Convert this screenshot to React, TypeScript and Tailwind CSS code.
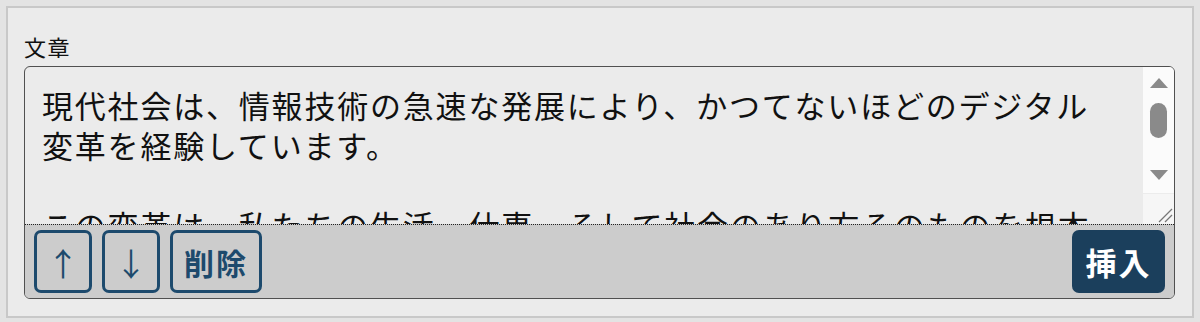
import React from "react";

const FONT = { fontFamily: '"Noto Sans CJK JP", "Noto Sans", sans-serif' };

function FakeScrollbar() {
  return (
    <div className="w-[31px] shrink-0 flex flex-col bg-[#fbfbfb]">
      <div className="h-[126px] flex flex-col items-center pt-[11px]">
        <svg width="18" height="10" viewBox="0 0 18 10">
          <polygon points="9,0 18,10 0,10" fill="#8a8a8a" />
        </svg>
        <div className="mt-[15px] w-[17px] h-[35px] rounded-full bg-[#8a8a8a]" />
        <svg className="mt-[32px]" width="18" height="10" viewBox="0 0 18 10">
          <polygon points="0,0 18,0 9,10" fill="#8a8a8a" />
        </svg>
      </div>
      <div className="flex-1 flex items-end justify-end border-t border-[#ececec] bg-[#f6f6f6]">
        <svg width="16" height="16" viewBox="0 0 16 16" className="mb-[1px] mr-[1px]">
          <line x1="2" y1="15" x2="15" y2="2" stroke="#777" strokeWidth="1.3" />
          <line x1="8" y1="15" x2="15" y2="8" stroke="#777" strokeWidth="1.3" />
        </svg>
      </div>
    </div>
  );
}

export default function App() {
  const lines = [
    "現代社会は、情報技術の急速な発展により、かつてないほどのデジタル",
    "変革を経験しています。",
    "",
    "この変革は、私たちの生活、仕事、そして社会のあり方そのものを根本",
  ];
  return (
    <div className="h-[322px] w-[1200px] bg-[#e3e3e3] px-[6px] pt-[6px]" style={FONT}>
      <div className="h-[312px] border-2 border-[#c8c8c8] bg-[#ebebeb] pl-4 pr-[17px] pt-[24px]">
        <div className="text-[22px] leading-[28px] tracking-[1.5px] text-[#111] mb-[6px]">文章</div>
        <div className="rounded-[6px] border border-[#505050] overflow-hidden bg-[#ebebeb]">
          <div className="flex h-[157px]">
            <div className="flex-1 overflow-hidden pl-[17px] pt-[18px] text-[31px] leading-[40px] tracking-[1.8px] text-[#111]">
              {lines.map((l, i) => (
                <div key={i} className="whitespace-nowrap h-[40px]">
                  {l}
                </div>
              ))}
            </div>
            <FakeScrollbar />
          </div>
          <div className="h-[74px] border-t border-dotted border-[#222] bg-[#cccccc] flex items-center justify-between px-[9px]">
            <div className="flex gap-[10px]">
              <button className="w-[58px] h-[63px] rounded-[7px] border-[3px] border-[#1d4a6d] text-[#1d4a6d] text-[32px] leading-none flex items-center justify-center">
                ↑
              </button>
              <button className="w-[58px] h-[63px] rounded-[7px] border-[3px] border-[#1d4a6d] text-[#1d4a6d] text-[32px] leading-none flex items-center justify-center">
                ↓
              </button>
              <button className="w-[92px] h-[63px] rounded-[7px] border-[3px] border-[#1d4a6d] text-[#1d4a6d] text-[30px] leading-none font-bold tracking-[2px] flex items-center justify-center">
                削除
              </button>
            </div>
            <button className="w-[93px] h-[63px] rounded-[7px] bg-[#1b3f5c] text-white text-[31px] leading-none font-bold tracking-[2px] flex items-center justify-center">
              挿入
            </button>
          </div>
        </div>
      </div>
    </div>
  );
}
